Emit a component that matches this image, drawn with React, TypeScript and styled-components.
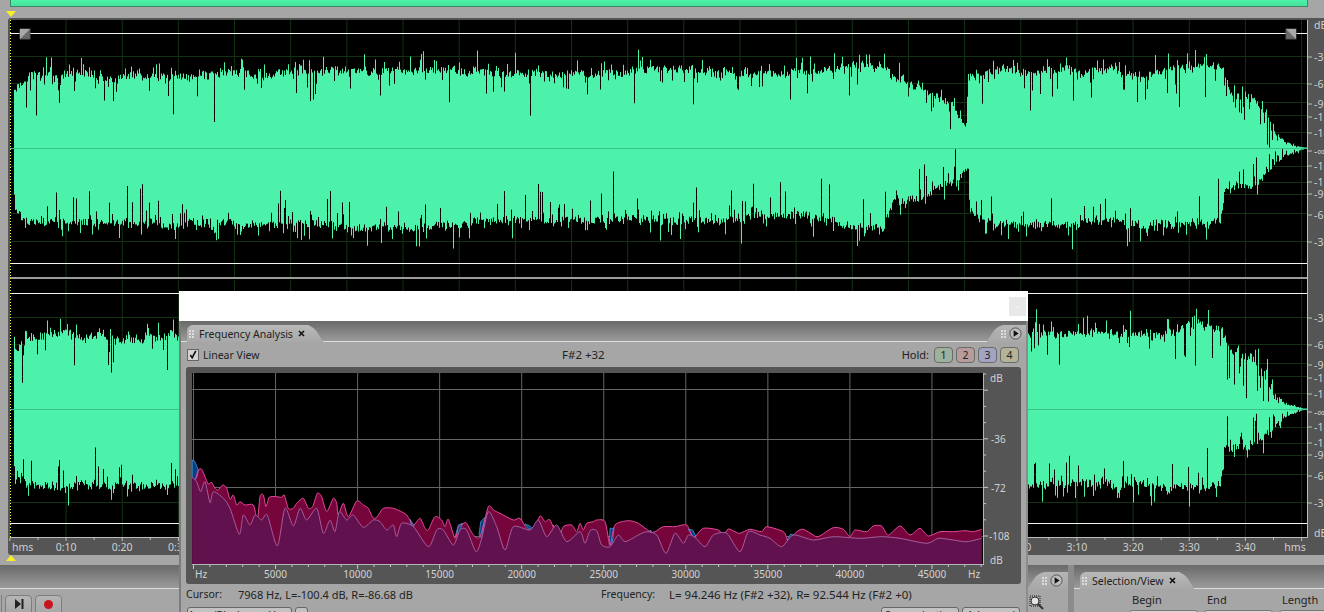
import styled, { createGlobalStyle } from 'styled-components';

type Pt = [number, number];

const GlobalStyle = createGlobalStyle`
  html, body {
    margin: 0;
    padding: 0;
    background: #a6a6a6;
  }
  body {
    font-family: "Noto Sans", "Liberation Sans", Arial, sans-serif;
    font-size: 10.5px;
    color: #222;
  }
`;

// ---- waveform data ----

const topEnv: Pt[] = [[14, 92], [30, 76], [60, 74], [100, 76], [150, 78], [200, 74], [250, 76], [300, 70], [350, 72], [400, 72], [450, 68], [500, 76], [550, 76], [600, 74], [650, 72], [700, 72], [750, 74], [800, 72], [850, 64], [885, 66], [890, 76], [920, 90], [950, 105], [966, 124], [968, 76], [1000, 70], [1050, 72], [1100, 72], [1150, 74], [1200, 66], [1222, 66], [1230, 90], [1250, 98], [1265, 108], [1272, 130], [1285, 143], [1300, 147], [1308, 148]];
const bottomEnv: Pt[] = [[14, 208], [30, 224], [100, 224], [200, 224], [300, 224], [400, 228], [500, 222], [600, 222], [700, 218], [800, 216], [884, 228], [890, 204], [920, 198], [960, 176], [967, 172], [970, 212], [1000, 224], [1100, 224], [1220, 224], [1225, 190], [1250, 188], [1270, 168], [1285, 155], [1300, 150], [1308, 148]];

const lerp = (env: Pt[], x: number) => {
  for (let i = 1; i < env.length; i++) {
    if (x <= env[i][0]) {
      const [x0, y0] = env[i - 1];
      const [x1, y1] = env[i];
      return y0 + ((y1 - y0) * (x - x0)) / (x1 - x0);
    }
  }
  return env[env.length - 1][1];
};

const makeRandom = (seed: number) => () => {
  seed = (seed * 16807) % 2147483647;
  return seed / 2147483647;
};

// one edge of the wave, returned as distance from the centre line for each pixel
const waveEdge = (env: Pt[], seed: number) => {
  const rnd = makeRandom(seed);
  const out: number[] = [];
  let drift = 0;
  for (let x = 14; x < 1308; x++) {
    const amp = Math.abs(lerp(env, x) - 148);
    const k = Math.min(1, amp / 25);
    if (rnd() < 0.08) drift = (rnd() - 0.5) * 6;
    let d = amp + drift * k + (rnd() - 0.5) * 8 * k;
    const r = rnd();
    const tail = x > 1222 && x < 1280;
    if (r < (tail ? 0.28 : 0.13)) d -= (4 + rnd() * rnd() * 42) * k;
    else if (r < (tail ? 0.36 : 0.27)) d += (3 + rnd() * rnd() * 22) * k;
    out.push(Math.max(0.5, d));
  }
  return out;
};

const wavePath = (center: number, seed: number) => {
  const up = waveEdge(topEnv, seed);
  const down = waveEdge(bottomEnv, seed + 77);
  let d = `M14 ${center}`;
  up.forEach((v, i) => {
    d += `L${14 + i} ${(center - v).toFixed(1)}L${15 + i} ${(center - v).toFixed(1)}`;
  });
  for (let i = down.length - 1; i >= 0; i--) {
    d += `L${15 + i} ${(center + down[i]).toFixed(1)}L${14 + i} ${(center + down[i]).toFixed(1)}`;
  }
  return d + 'Z';
};

const gridX = Array.from({ length: 24 }, (_, k) => 9.9 + 56.16 * k).slice(1);
const dbLabels: [string, number][] = [['-3', -91], ['-6', -64], ['-9', -44], ['-12', -31], ['-18', -15], ['-∞', 3], ['-18', 18], ['-12', 34], ['-9', 46], ['-6', 67], ['-3', 94]];
const dbLines = [-92, -65, -46, -33, -16, 18, 34, 46, 65, 93];

const Channel = ({ center, top, bottom, seed }: { center: number; top: number; bottom: number; seed: number }) => (
  <g>
    {gridX.map((x) => <line key={x} x1={x} x2={x} y1={top - 13} y2={bottom + 14} stroke="#123212" />)}
    {dbLines.map((d) => <line key={d} x1={10} x2={1307} y1={center + d + 0.5} y2={center + d + 0.5} stroke="#123212" />)}
    <path d={wavePath(center, seed)} fill="#4cf2a9" />
    <line x1={10} x2={1307} y1={center + 0.5} y2={center + 0.5} stroke="#3dbf8c" />
    <line x1={10} x2={1307} y1={top + 0.5} y2={top + 0.5} stroke="#f2f2f2" />
    <line x1={10} x2={1307} y1={bottom + 0.5} y2={bottom + 0.5} stroke="#f2f2f2" />
    {dbLabels.map(([t, d]) => <text key={t + d} x={1314} y={center + d + 4}>{t}</text>)}
    {dbLabels.map(([t, d]) => <line key={t + d} x1={1308} x2={1312} y1={center + d} y2={center + d} stroke="#bdbdbd" />)}
  </g>
);

const EnvelopeHandle = ({ x, flip }: { x: number; flip?: boolean }) => (
  <g>
    <rect x={x} y={29} width={10} height={10} fill="#6a6a6a" stroke="#555" />
    <polygon points={flip ? `${x},29 ${x + 10},29 ${x + 10},39` : `${x},39 ${x},29 ${x + 10},29`} fill="#a8a8a8" />
  </g>
);

// ---- spectrum data (measured from the display) ----

const left = (pts: Pt[]): Pt[] => pts.map(([x, y]) => [180 + x / 3, 440 + y / 3]);
const right = (pts: Pt[]): Pt[] => pts.map(([x, y]) => [580 + x / 3, 480 + y / 3]);

const redLine: Pt[] = [
  ...left([[37, 112], [45, 120], [55, 90], [65, 88], [75, 110], [85, 132], [95, 127], [105, 145], [115, 150], [128, 135], [140, 145], [150, 178], [160, 165], [170, 195], [180, 185], [195, 195], [220, 195], [232, 240], [240, 170], [250, 165], [258, 200], [268, 172], [290, 170], [305, 172], [313, 165], [325, 205], [340, 205], [350, 190], [370, 175], [385, 205], [398, 200], [412, 160], [425, 170], [440, 215], [460, 175], [470, 190], [475, 225], [490, 190], [505, 230], [530, 183], [550, 195], [565, 205], [578, 232], [590, 232], [610, 205], [640, 205], [660, 213], [680, 225], [700, 255], [720, 235], [735, 265], [745, 270], [765, 230], [785, 240], [795, 260], [805, 238], [825, 295], [835, 262], [850, 250], [860, 250], [880, 285], [900, 290], [925, 200], [940, 210], [960, 220], [1000, 240], [1020, 235], [1040, 265], [1060, 270], [1080, 228], [1095, 245], [1110, 240], [1135, 295], [1150, 260], [1175, 255], [1190, 275]]),
  ...right([[0, 130], [10, 150], [20, 130], [40, 125], [50, 120], [75, 125], [90, 195], [105, 135], [145, 122], [175, 130], [210, 155], [225, 155], [250, 140], [285, 140], [320, 135], [340, 172], [370, 145], [415, 150], [430, 165], [445, 147], [465, 155], [480, 160], [510, 148], [545, 155], [560, 140], [610, 155], [625, 180], [650, 155], [670, 148], [700, 165], [715, 170], [760, 143], [790, 148], [810, 170], [825, 150], [860, 155], [880, 138], [905, 138], [925, 165], [960, 138], [990, 165], [1020, 145], [1045, 168], [1080, 155], [1120, 155], [1155, 152], [1180, 155], [1205, 148]]),
];

const purpleLine: Pt[] = [
  ...left([[37, 112], [50, 125], [62, 155], [75, 125], [90, 188], [100, 155], [130, 175], [150, 205], [178, 283], [190, 225], [210, 255], [225, 225], [245, 240], [262, 225], [292, 318], [315, 205], [340, 258], [360, 205], [380, 240], [410, 205], [430, 280], [450, 240], [465, 275], [478, 215], [500, 240], [520, 225], [550, 262], [580, 240], [600, 245], [620, 270], [640, 255], [650, 290], [665, 250], [700, 260], [745, 320], [770, 270], [790, 270], [820, 315], [840, 270], [860, 270], [888, 335], [905, 295], [925, 215], [950, 260], [975, 330], [1000, 260], [1050, 270], [1075, 240], [1100, 290], [1130, 255], [1160, 305]]),
  ...right([[0, 155], [15, 190], [30, 152], [50, 152], [65, 195], [90, 200], [115, 165], [135, 185], [175, 165], [200, 155], [230, 165], [258, 220], [285, 160], [310, 190], [325, 165], [345, 172], [375, 200], [400, 165], [440, 160], [480, 215], [505, 155], [540, 165], [570, 175], [605, 200], [640, 165], [700, 180], [760, 170], [840, 175], [905, 170], [960, 175], [1040, 190], [1075, 175], [1120, 180], [1160, 185], [1205, 175]]),
];

const bluePatches: Pt[][] = [
  left([[37, 60], [45, 65], [55, 90], [52, 108], [45, 120], [37, 112]]),
  left([[690, 238], [703, 258], [695, 262]]),
  left([[826, 290], [835, 255], [848, 250], [838, 275]]),
  left([[897, 285], [902, 245], [915, 232], [905, 295]]),
  left([[1035, 252], [1050, 258], [1060, 270], [1045, 265]]),
  left([[1120, 255], [1135, 290], [1128, 285]]),
  right([[88, 195], [90, 145], [102, 145], [96, 195]]),
  right([[210, 150], [218, 158], [212, 158]]),
  right([[325, 148], [338, 150], [348, 170], [340, 172]]),
  right([[620, 180], [632, 162], [640, 165], [628, 180]]),
];

const pts = (list: Pt[]) => list.map(([x, y]) => `${x.toFixed(1)},${y.toFixed(1)}`).join(' ');

// catmull-rom through the measured points, the display draws round curves
const curve = (list: Pt[]) => {
  let d = `M${list[0][0].toFixed(1)} ${list[0][1].toFixed(1)}`;
  for (let i = 0; i < list.length - 1; i++) {
    const p0 = list[Math.max(0, i - 1)];
    const p1 = list[i];
    const p2 = list[i + 1];
    const p3 = list[Math.min(list.length - 1, i + 2)];
    const c1: Pt = [p1[0] + (p2[0] - p0[0]) / 8, p1[1] + (p2[1] - p0[1]) / 8];
    const c2: Pt = [p2[0] - (p3[0] - p1[0]) / 8, p2[1] - (p3[1] - p1[1]) / 8];
    d += `C${c1[0].toFixed(1)} ${c1[1].toFixed(1)} ${c2[0].toFixed(1)} ${c2[1].toFixed(1)} ${p2[0].toFixed(1)} ${p2[1].toFixed(1)}`;
  }
  return d;
};
const closedCurve = (list: Pt[]) => `${curve(list)}L${list[list.length - 1][0].toFixed(1)} 564L${list[0][0].toFixed(1)} 564Z`;

const freqX = Array.from({ length: 10 }, (_, k) => 193.5 + 82.05 * k);
const freqTicks = Array.from({ length: 49 }, (_, k) => 193.5 + 16.41 * k);
const dbTicks = Array.from({ length: 11 }, (_, k) => 536 - 16.2 * k);

const timeTicks = Array.from({ length: 47 }, (_, k) => 9.9 + 28.08 * k);
const timeLabels = Array.from({ length: 22 }, (_, k) => {
  const s = (k + 1) * 10;
  return { x: 9.9 + 56.16 * (k + 1), text: `${Math.floor(s / 60)}:${String(s % 60).padStart(2, '0')}` };
});

// ---- small pieces ----

const Grip = () => (
  <GripDots><i /><i /><i /><i /><i /><i /></GripDots>
);

const MenuButton = () => (
  <svg width="13" height="13" viewBox="0 0 13 13">
    <circle cx="6.5" cy="6.5" r="5.6" fill="#bdbdbd" stroke="#555" />
    <polygon points="4.6,3.2 9.6,6.5 4.6,9.8" fill="#111" />
  </svg>
);

const CloseX = () => (
  <svg width="7" height="7" viewBox="0 0 7 7">
    <path d="M1 1L6 6M6 1L1 6" stroke="#111" strokeWidth="1.6" />
  </svg>
);

export default function App() {
  return (
    <>
      <GlobalStyle />
      <Page>
        <Overview />
        <MarkerStrip><Marker /></MarkerStrip>

        <WaveSvg width={1316} height={537} viewBox="8 18 1316 537">
          <rect x={10} y={20} width={1297} height={517} fill="#000" />
          <Channel center={148} top={33} bottom={263} seed={4711} />
          <rect x={10} y={277} width={1297} height={2} fill="#9c9c9c" />
          <Channel center={409} top={293} bottom={523} seed={90210} />
          <line x1={10.5} x2={10.5} y1={20} y2={537} stroke="#ffff33" strokeDasharray="1 2" />
          <line x1={1307.5} x2={1307.5} y1={20} y2={537} stroke="#bdbdbd" />
          <line x1={10} x2={1308} y1={537.5} y2={537.5} stroke="#bdbdbd" />
          <EnvelopeHandle x={20} />
          <EnvelopeHandle x={1286} flip />
          <text x={1314} y={29}>dB</text>
          <text x={1314} y={537}>dB</text>
          {timeTicks.map((x, k) => <line key={x} x1={x} x2={x} y1={538} y2={k % 2 === 0 ? 541 : 540} stroke="#bdbdbd" />)}
          <text x={12} y={551}>hms</text>
          {timeLabels.map((t) => <text key={t.text} x={t.x} y={551} textAnchor="middle">{t.text}</text>)}
          <text x={1295} y={551} textAnchor="middle">hms</text>
        </WaveSvg>

        <MarkerStrip $bottom><Marker $up /></MarkerStrip>

        <Dock>
          <TransportPanel>
            <PanelTabs $height={24}>
              <Spacer />
              <MenuTab $pad={5}><Grip /><MenuButton /></MenuTab>
            </PanelTabs>
            <TransportBody>
              <ClippedButton />
              <TransportButton>
                <svg width="14" height="14" viewBox="0 0 14 14">
                  <polygon points="3,2 9,7 3,12" fill="#222" />
                  <rect x="9.5" y="2" width="2" height="10" fill="#222" />
                </svg>
              </TransportButton>
              <TransportButton><RecordDot /></TransportButton>
              <ZoomIcon width="16" height="16" viewBox="0 0 16 16">
                <rect x="1" y="1" width="10" height="10" fill="none" stroke="#111" strokeDasharray="1 1" />
                <circle cx="6" cy="6" r="4" fill="#e4e4e4" stroke="#333" />
                <path d="M9 9L14 14" stroke="#333" strokeWidth="2" />
              </ZoomIcon>
            </TransportBody>
          </TransportPanel>

          <SelectionPanel>
            <PanelTabs $height={24}>
              <Tab $inset={6}><Grip /><span>Selection/View</span><CloseX /></Tab>
            </PanelTabs>
            <SelectionGrid>
              <SelectionColumn><span>Begin</span><TimeField /></SelectionColumn>
              <SelectionColumn><span>End</span><TimeField /></SelectionColumn>
              <SelectionColumn><span>Length</span><TimeField /></SelectionColumn>
            </SelectionGrid>
          </SelectionPanel>
        </Dock>

        <FreqWindow>
          <TitleBar><TitleClose>▫</TitleClose></TitleBar>
          <WindowBody>
            <PanelTabs $height={21}>
              <Tab $inset={6}><Grip /><span>Frequency Analysis</span><CloseX /></Tab>
              <Spacer />
              <MenuTab $pad={4}><Grip /><MenuButton /></MenuTab>
            </PanelTabs>
            <OptionsRow>
              <LinearView>
                <CheckBox>
                  <svg width="11" height="11" viewBox="0 0 11 11">
                    <path d="M2.5 6L4.6 9L8.6 1.5" fill="none" stroke="#111" strokeWidth="1.8" />
                  </svg>
                </CheckBox>
                Linear View
              </LinearView>
              <NoteText>F#2 +32</NoteText>
              <HoldGroup>
                <HoldLabel>Hold:</HoldLabel>
                <HoldButton $tone="#9db19d">1</HoldButton>
                <HoldButton $tone="#b89b9b">2</HoldButton>
                <HoldButton $tone="#a3a3c4">3</HoldButton>
                <HoldButton $tone="#b3b398">4</HoldButton>
              </HoldGroup>
            </OptionsRow>

            <SpectrumSvg width={835} height={217} viewBox="186 367 835 217">
              <rect x={192} y={373} width={791} height={192} fill="#000" />
              {freqX.map((x) => <line key={x} x1={x} x2={x} y1={373} y2={565} stroke="#666" />)}
              {[389.5, 439.5, 487.5, 536.5].map((y) => <line key={y} x1={192} x2={983} y1={y} y2={y} stroke="#666" />)}
              <path d={closedCurve(redLine)} fill="#75053a" />
              {bluePatches.map((p) => <polygon key={p[0][0]} points={pts(p)} fill="#0b3f82" stroke="#4aa6e2" strokeWidth="0.7" />)}
              <path d={curve(redLine)} fill="none" stroke="#e8489a" />
              <path d={closedCurve(purpleLine)} fill="#62114f" />
              <path d={curve(purpleLine)} fill="none" stroke="#a45f9e" />
              <line x1={192} x2={983} y1={564.5} y2={564.5} stroke="#b5b5b5" />
              <line x1={983.5} x2={983.5} y1={373} y2={565} stroke="#b5b5b5" />
              {freqTicks.map((x, k) => <line key={x} x1={x} x2={x} y1={565} y2={k % 5 === 0 ? 569 : 567} stroke="#c8c8c8" />)}
              {dbTicks.map((y, k) => <line key={y} x1={984} x2={k % 3 === 0 ? 988 : 986} y1={y} y2={y} stroke="#c8c8c8" />)}
              <text x={195} y={578}>Hz</text>
              {freqX.slice(1).map((x, k) => <text key={x} x={x} y={578} textAnchor="middle">{(k + 1) * 5000}</text>)}
              <text x={968} y={578}>Hz</text>
              <text x={990} y={382}>dB</text>
              <text x={991} y={443}>-36</text>
              <text x={991} y={492}>-72</text>
              <text x={989} y={540}>-108</text>
              <text x={990} y={564}>dB</text>
            </SpectrumSvg>

            <StatusRow>
              <CursorLabel>Cursor:</CursorLabel>
              <CursorValue>7968 Hz, L=-100.4 dB, R=-86.68 dB</CursorValue>
              <FrequencyLabel>Frequency:</FrequencyLabel>
              <NoteText>L= 94.246 Hz (F#2 +32), R= 92.544 Hz (F#2 +0)</NoteText>
            </StatusRow>
            <ButtonRow>
              <FlatButton $width={105}>Area (Blackman-Harris)</FlatButton>
              <FlatButton $width={13} />
              <Spacer />
              <FlatButton $width={78}>Scan selection</FlatButton>
              <FlatButton $width={58}>Advanced</FlatButton>
            </ButtonRow>
          </WindowBody>
        </FreqWindow>
      </Page>
    </>
  );
}

const Page = styled.div`
  position: relative;
  width: 1324px;
  height: 612px;
  overflow: hidden;
  display: flex;
  flex-direction: column;
  background: #a6a6a6;
`;

const Overview = styled.div`
  flex: none;
  height: 6px;
  margin: 0 16px 0 10px;
  background: linear-gradient(#4cf2a9, #4be09c);
  border: 1px solid #3d8a68;
  border-top: none;
`;

const MarkerStrip = styled.div<{ $bottom?: boolean }>`
  flex: none;
  height: ${(p) => (p.$bottom ? '10px' : '11px')};
  padding-left: 6px;
  display: flex;
  align-items: ${(p) => (p.$bottom ? 'flex-start' : 'flex-end')};
  padding-bottom: ${(p) => (p.$bottom ? '0' : '1px')};
  box-sizing: border-box;
`;

const Marker = styled.div<{ $up?: boolean }>`
  width: 0;
  height: 0;
  border-left: 5px solid transparent;
  border-right: 5px solid transparent;
  ${(p) => (p.$up ? 'border-bottom: 6px solid #f7ef2a;' : 'border-top: 6px solid #f7ef2a;')}
`;

const WaveSvg = styled.svg`
  flex: none;
  display: block;
  margin-left: 8px;
  background: #555;
  border-radius: 3px 0 0 3px;
  text {
    font-family: "Noto Sans", "Liberation Sans", Arial, sans-serif;
    font-size: 10.5px;
    fill: #cfcfcf;
  }
`;

const Dock = styled.div`
  flex: 1;
  display: flex;
  gap: 6px;
  background: #8c8c8c;
`;

const TransportPanel = styled.div`
  width: 1068px;
  display: flex;
  flex-direction: column;
`;

const PanelTabs = styled.div<{ $height: number }>`
  flex: none;
  height: ${(p) => p.$height}px;
  box-sizing: border-box;
  display: flex;
  align-items: flex-end;
  background: linear-gradient(#696969, #9b9b9b);
  border-bottom: 1px solid #dcdcdc;
`;

const Spacer = styled.div`
  flex: 1;
`;

const Tab = styled.div<{ $inset: number }>`
  position: relative;
  display: flex;
  align-items: center;
  gap: 5px;
  height: 17px;
  margin-left: ${(p) => p.$inset}px;
  margin-bottom: -1px;
  padding: 0 4px 0 2px;
  background: linear-gradient(#b9b9b9, #a8a8a8);
  border-radius: 6px 0 0 0;
  &::after {
    content: '';
    position: absolute;
    top: 0;
    bottom: 0;
    right: -9px;
    width: 16px;
    background: linear-gradient(#b9b9b9, #a8a8a8);
    border-radius: 0 7px 0 0;
    transform: skewX(32deg);
  }
  & > * {
    position: relative;
    z-index: 1;
  }
`;

const MenuTab = styled.div<{ $pad: number }>`
  position: relative;
  display: flex;
  align-items: center;
  gap: 3px;
  height: 17px;
  padding: 0 ${(p) => p.$pad}px 0 3px;
  margin-bottom: -1px;
  background: linear-gradient(#b5b5b5, #a8a8a8);
  border-radius: 8px 0 0 0;
  &::before {
    content: '';
    position: absolute;
    top: 0;
    bottom: 0;
    left: -6px;
    width: 12px;
    background: linear-gradient(#b5b5b5, #a8a8a8);
    border-radius: 7px 0 0 0;
    transform: skewX(-32deg);
  }
  & > * {
    position: relative;
    z-index: 1;
  }
`;

const GripDots = styled.div`
  display: grid;
  grid-template-columns: 2px 2px;
  gap: 1px;
  i {
    width: 2px;
    height: 2px;
    background: #dcdcdc;
  }
`;

const TransportBody = styled.div`
  flex: 1;
  display: flex;
  gap: 3px;
  padding-top: 6px;
  background: #a6a6a6;
`;

const ClippedButton = styled.div`
  width: 2px;
  height: 26px;
  box-sizing: border-box;
  border-right: 1px solid #7d7d7d;
`;

const TransportButton = styled.div`
  width: 27px;
  height: 26px;
  display: flex;
  align-items: center;
  justify-content: center;
  padding-bottom: 8px;
  box-sizing: border-box;
  border: 1px solid #7d7d7d;
  border-radius: 4px;
  background: linear-gradient(#b5b5b5, #a2a2a2);
`;

const RecordDot = styled.div`
  width: 9px;
  height: 9px;
  border-radius: 50%;
  background: #c8141e;
`;

const ZoomIcon = styled.svg`
  margin-left: auto;
  margin-right: 23px;
`;

const SelectionPanel = styled.div`
  flex: 1;
  display: flex;
  flex-direction: column;
  overflow: hidden;
`;

const SelectionGrid = styled.div`
  flex: 1;
  display: flex;
  gap: 6px;
  padding: 3px 0 0 55px;
  background: #a6a6a6;
`;

const SelectionColumn = styled.div`
  flex: none;
  width: 69px;
  display: flex;
  flex-direction: column;
  gap: 3px;
  font-size: 11px;
  span {
    padding-left: 3px;
  }
`;

const TimeField = styled.div`
  height: 14px;
  background: #d8d8d8;
  border: 1px solid #777;
  border-radius: 3px 3px 0 0;
`;

const FreqWindow = styled.div`
  position: absolute;
  top: 291px;
  left: 179px;
  width: 849px;
  height: 321px;
  display: flex;
  flex-direction: column;
  background: #a6a6a6;
`;

const TitleBar = styled.div`
  flex: none;
  height: 30px;
  display: flex;
  align-items: center;
  justify-content: flex-end;
  padding-right: 2px;
  background: #fff;
`;

const TitleClose = styled.div`
  width: 17px;
  height: 19px;
  display: flex;
  align-items: center;
  justify-content: center;
  font-size: 7px;
  color: #fff;
  background: #e8e8e8;
`;

const WindowBody = styled.div`
  flex: 1;
  display: flex;
  flex-direction: column;
  border-left: 2px solid #7c7c7c;
  border-right: 2px solid #8c8c8c;
`;

const OptionsRow = styled.div`
  flex: none;
  height: 25px;
  display: flex;
  align-items: center;
  padding: 0 7px 0 6px;
`;

const LinearView = styled.label`
  width: 375px;
  display: flex;
  align-items: center;
  gap: 4px;
`;

const NoteText = styled.span`
  font-size: 11.5px;
`;

const CheckBox = styled.div`
  width: 10px;
  height: 10px;
  display: flex;
  align-items: center;
  justify-content: center;
  background: #d4d4d4;
  border: 1px solid #666;
`;

const HoldGroup = styled.div`
  margin-left: auto;
  display: flex;
  align-items: center;
  gap: 3px;
`;

const HoldLabel = styled.span`
  margin-right: 2px;
  font-size: 11px;
`;

const HoldButton = styled.div<{ $tone: string }>`
  width: 19px;
  height: 16px;
  box-sizing: border-box;
  display: flex;
  align-items: center;
  justify-content: center;
  background: ${(p) => p.$tone};
  border: 1px solid #6a6a6a;
  border-radius: 4px;
`;

const SpectrumSvg = styled.svg`
  flex: none;
  display: block;
  margin-left: 5px;
  background: #555;
  border-radius: 3px;
  text {
    font-family: "Noto Sans", "Liberation Sans", Arial, sans-serif;
    font-size: 10px;
    fill: #d2d2d2;
  }
`;

const StatusRow = styled.div`
  flex: none;
  height: 20px;
  display: flex;
  align-items: center;
  padding-left: 5px;
`;

const CursorLabel = styled.span`
  width: 52px;
`;

const CursorValue = styled.span`
  width: 363px;
  font-size: 11px;
`;

const FrequencyLabel = styled.span`
  width: 68px;
`;

const ButtonRow = styled.div`
  flex: none;
  display: flex;
  gap: 3px;
  padding: 3px 6px 0;
`;

const FlatButton = styled.div<{ $width: number }>`
  width: ${(p) => p.$width}px;
  height: 18px;
  box-sizing: border-box;
  text-align: center;
  white-space: nowrap;
  overflow: hidden;
  background: #c2c2c2;
  border: 1px solid #666;
  border-radius: 3px;
`;
